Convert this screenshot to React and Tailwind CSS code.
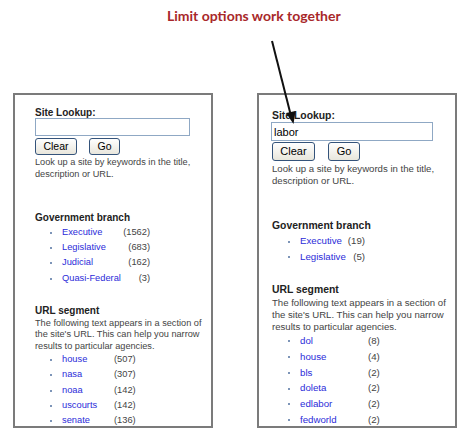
import React from 'react'

const govLeft = [
    ['Executive', '(1562)'],
    ['Legislative', '(683)'],
    ['Judicial', '(162)'],
    ['Quasi-Federal', '(3)'],
]
const urlLeft = [
    ['house', '(507)'],
    ['nasa', '(307)'],
    ['noaa', '(142)'],
    ['uscourts', '(142)'],
    ['senate', '(136)'],
]
const govRight = [
    ['Executive', '(19)'],
    ['Legislative', '(5)'],
]
const urlRight = [
    ['dol', '(8)'],
    ['house', '(4)'],
    ['bls', '(2)'],
    ['doleta', '(2)'],
    ['edlabor', '(2)'],
    ['fedworld', '(2)'],
]

const Bullet = () => (
    <span className="w-[12px] flex items-center">
        <span className="block w-[2px] h-[2px] bg-[#7d95b8]"></span>
    </span>
)

const Button = ({ label, className }) => (
    <button className={"rounded-[3px] border border-[#34537a] bg-gradient-to-b from-white to-[#e8e6dc] text-black leading-none " + className}>
        {label}
    </button>
)

const App = () => {
    return (
        <div className="relative w-[470px] h-[441px] bg-white overflow-hidden font-['Liberation_Sans',Arial,sans-serif]">
            {/* caption */}
            <div className="pt-[7px] h-[93px] pl-[167px]">
                <p className="font-['Lato',sans-serif] font-bold text-[14px] leading-[18px] text-[#a8282a]">Limit options work together</p>
            </div>

            <div className="flex pl-[13px] gap-[44px]">
                {/* before */}
                <div className="w-[200px] h-[335px] border-2 border-[#7b7b7b] overflow-hidden pl-[20px] pt-[12px]">
                    <p className="text-[10px] leading-[12px] font-bold text-[#222]">Site Lookup:</p>
                    <input type="text" className="block w-[155px] h-[18px] mt-[-1px] border border-[#8fa8c4] outline-none" />
                    <div className="flex gap-[12px] mt-[2px]">
                        <Button label="Clear" className="w-[42px] h-[17px] text-[10.5px]" />
                        <Button label="Go" className="w-[31px] h-[17px] text-[10.5px]" />
                    </div>
                    <p className="mt-[2px] text-[9.2px] leading-[11.5px] text-[#444]">Look up a site by keywords in the title,<br />description or URL.</p>

                    <p className="mt-[32px] text-[10px] leading-[12px] font-bold text-[#222]">Government branch</p>
                    <div className="ml-[15px] mt-[1px]">
                        {govLeft.map(([name, count]) => (
                            <div key={name} className="flex h-[15.3px] items-center text-[9.3px]">
                                <Bullet />
                                <a className="w-[60px] text-[#2b2bd9]">{name}</a>
                                <span className="w-[28px] text-right text-[#444]">{count}</span>
                            </div>
                        ))}
                    </div>

                    <p className="mt-[19px] text-[10px] leading-[12px] font-bold text-[#222]">URL segment</p>
                    <p className="mt-[1px] text-[9.2px] leading-[11.2px] text-[#444]">The following text appears in a section of<br />the site's URL. This can help you narrow<br />results to particular agencies.</p>
                    <div className="ml-[15px] mt-[1px]">
                        {urlLeft.map(([name, count]) => (
                            <div key={name} className="flex h-[15.1px] items-center text-[9.3px]">
                                <Bullet />
                                <a className="w-[52px] text-[#2b2bd9]">{name}</a>
                                <span className="text-[#444]">{count}</span>
                            </div>
                        ))}
                    </div>
                </div>

                {/* after */}
                <div className="w-[200px] h-[335px] border-2 border-[#7b7b7b] overflow-hidden pl-[13px] pt-[15px]">
                    <p className="text-[10.4px] leading-[12px] font-bold text-[#222]">Site Lookup:</p>
                    <input type="text" defaultValue="labor" className="block w-[162px] h-[19px] -ml-px border border-[#8fa8c4] outline-none px-[2px] text-[11px] text-black" />
                    <div className="flex gap-[13px] mt-[1px]">
                        <Button label="Clear" className="w-[43px] h-[19px] text-[11px]" />
                        <Button label="Go" className="w-[32px] h-[19px] text-[11px]" />
                    </div>
                    <p className="mt-[2px] text-[9.6px] leading-[12px] text-[#444]">Look up a site by keywords in the title,<br />description or URL.</p>

                    <p className="mt-[33px] text-[10.4px] leading-[12px] font-bold text-[#222]">Government branch</p>
                    <div className="ml-[16px] mt-[2px]">
                        {govRight.map(([name, count]) => (
                            <div key={name} className="flex h-[15.5px] items-center text-[9.7px]">
                                <Bullet />
                                <a className="w-[46px] text-[#2b2bd9]">{name}</a>
                                <span className="w-[19px] text-right text-[#444]">{count}</span>
                            </div>
                        ))}
                    </div>

                    <p className="mt-[19px] text-[10.4px] leading-[12px] font-bold text-[#222]">URL segment</p>
                    <p className="mt-[1px] text-[9.6px] leading-[11.8px] text-[#444]">The following text appears in a section of<br />the site's URL. This can help you narrow<br />results to particular agencies.</p>
                    <div className="ml-[16px] mt-[1px]">
                        {urlRight.map(([name, count]) => (
                            <div key={name} className="flex h-[15.8px] items-center text-[9.7px]">
                                <Bullet />
                                <a className="w-[68px] text-[#2b2bd9]">{name}</a>
                                <span className="text-[#444]">{count}</span>
                            </div>
                        ))}
                    </div>
                </div>
            </div>

            {/* arrow from caption to the search box */}
            <svg className="absolute left-0 top-0 pointer-events-none" width="470" height="441">
                <line x1="272" y1="41" x2="291" y2="116" stroke="#111" strokeWidth="2" />
                <polygon points="293.5,124 286,113 295.5,111" fill="#111" />
            </svg>
        </div>
    )
}

export default App
